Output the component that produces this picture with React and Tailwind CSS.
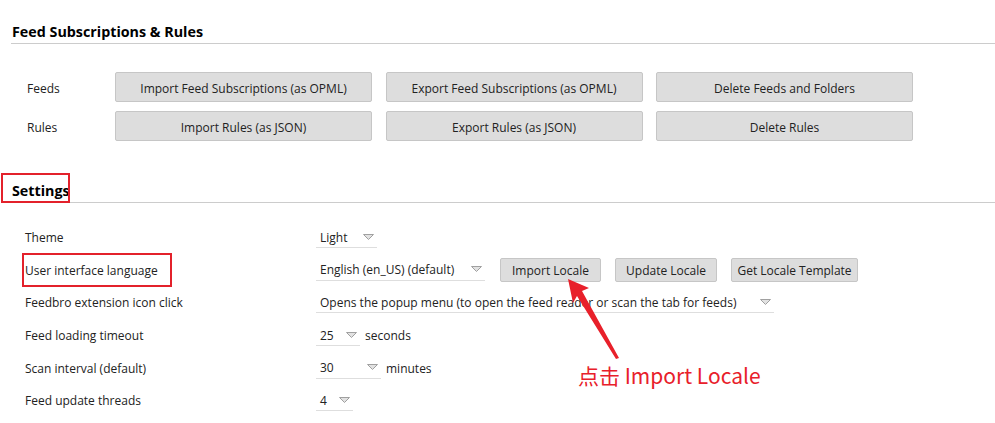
import React from 'react';

const font = { fontFamily: '"Open Sans", "Noto Sans", sans-serif' };

function Btn({ children, w, h = 'h-[30px]' }) {
    return (
        <button
            className={`${w} ${h} shrink-0 bg-[#dddddd] border border-[#c6c6c6] rounded-[2px] text-[12px] text-[#222] flex items-center justify-center pt-[3px]`}
        >
            {children}
        </button>
    );
}

function Arrow() {
    return (
        <svg width="11" height="6" viewBox="0 0 11 6" className="shrink-0">
            <polygon points="0.5,0.5 10.5,0.5 5.5,5.5" fill="#e2e2e2" stroke="#a0a0a0" strokeWidth="1" />
        </svg>
    );
}

function Select({ value, w }) {
    return (
        <div className={`${w} h-[22px] shrink-0 flex items-center justify-between pl-[4px] pr-[3px] border-b border-[#dedede] text-[12px] text-[#222]`}>
            <span className="whitespace-nowrap pt-[2px]">{value}</span>
            <Arrow />
        </div>
    );
}

function Row({ label, children, boxed }) {
    return (
        <div className="h-[32.6px] flex items-center">
            <div className="w-[291px] shrink-0 text-[12px] text-[#222] pt-[2px]">
                <span className="relative">
                    {label}
                    {boxed && (
                        <span className="absolute -left-[3px] -top-[9px] w-[150px] h-[34px] border-2 border-[#e3212b]"></span>
                    )}
                </span>
            </div>
            <div className="flex items-center">{children}</div>
        </div>
    );
}

export default function App() {
    return (
        <div className="relative w-[995px] h-[423px] bg-white overflow-hidden" style={font}>

            {/* Feed Subscriptions & Rules */}
            <div className="pt-[22px] pl-[11px]">
                <h2 className="text-[14.3px] font-bold leading-[20px] text-black pl-px pb-px border-b border-[#cccccc]">
                    Feed Subscriptions &amp; Rules
                </h2>
            </div>

            <div className="mt-[28px] pl-[27px] flex flex-col gap-[9px]">
                <div className="flex items-center">
                    <div className="w-[88px] text-[12px] text-[#222] pt-[3px]">Feeds</div>
                    <div className="flex gap-[13.5px]">
                        <Btn w="w-[257px]">Import Feed Subscriptions (as OPML)</Btn>
                        <Btn w="w-[257px]">Export Feed Subscriptions (as OPML)</Btn>
                        <Btn w="w-[257px]">Delete Feeds and Folders</Btn>
                    </div>
                </div>
                <div className="flex items-center">
                    <div className="w-[88px] text-[12px] text-[#222] pt-[3px]">Rules</div>
                    <div className="flex gap-[13.5px]">
                        <Btn w="w-[257px]">Import Rules (as JSON)</Btn>
                        <Btn w="w-[257px]">Export Rules (as JSON)</Btn>
                        <Btn w="w-[257px]">Delete Rules</Btn>
                    </div>
                </div>
            </div>

            {/* Settings */}
            <div className="mt-[40px] pl-[11px]">
                <h2 className="text-[14.3px] font-bold leading-[20px] text-black pl-px pb-px border-b border-[#cccccc]">
                    <span className="relative">
                        Settings
                        <span className="absolute -left-[11px] -top-[8px] w-[69px] h-[30px] border-2 border-[#e3212b]"></span>
                    </span>
                </h2>
            </div>

            <div className="mt-[18px] pl-[25px]">
                <Row label="Theme">
                    <Select value="Light" w="w-[61px]" />
                </Row>
                <Row label="User interface language" boxed>
                    <Select value="English (en_US) (default)" w="w-[169px]" />
                    <div className="flex gap-[14px] ml-[15px]">
                        <Btn w="w-[101px]" h="h-[24px]">Import Locale</Btn>
                        <Btn w="w-[102px]" h="h-[24px]">Update Locale</Btn>
                        <Btn w="w-[127px]" h="h-[24px]">Get Locale Template</Btn>
                    </div>
                </Row>
                <Row label="Feedbro extension icon click">
                    <Select value="Opens the popup menu (to open the feed reader or scan the tab for feeds)" w="w-[458px]" />
                </Row>
                <Row label="Feed loading timeout">
                    <Select value="25" w="w-[44px]" />
                    <span className="ml-[5px] text-[12px] text-[#222] pt-[2px]">seconds</span>
                </Row>
                <Row label="Scan interval (default)">
                    <Select value="30" w="w-[65px]" />
                    <span className="ml-[5px] text-[12px] text-[#222] pt-[2px]">minutes</span>
                </Row>
                <Row label="Feed update threads">
                    <Select value="4" w="w-[37px]" />
                </Row>
            </div>

            {/* annotation arrow */}
            <svg className="absolute left-0 top-0" width="995" height="423">
                <polygon points="568,279 589,288 582,291 619,358 616,359 577,296 573,303" fill="#e8202a" />
            </svg>
            <div
                className="absolute left-[578px] top-[361px] text-[21px] leading-[28px] text-[#e8202a] whitespace-nowrap"
                style={{ fontFamily: '"Noto Sans CJK SC", "Noto Sans", sans-serif' }}
            >
                点击 Import Locale
            </div>
        </div>
    );
}
